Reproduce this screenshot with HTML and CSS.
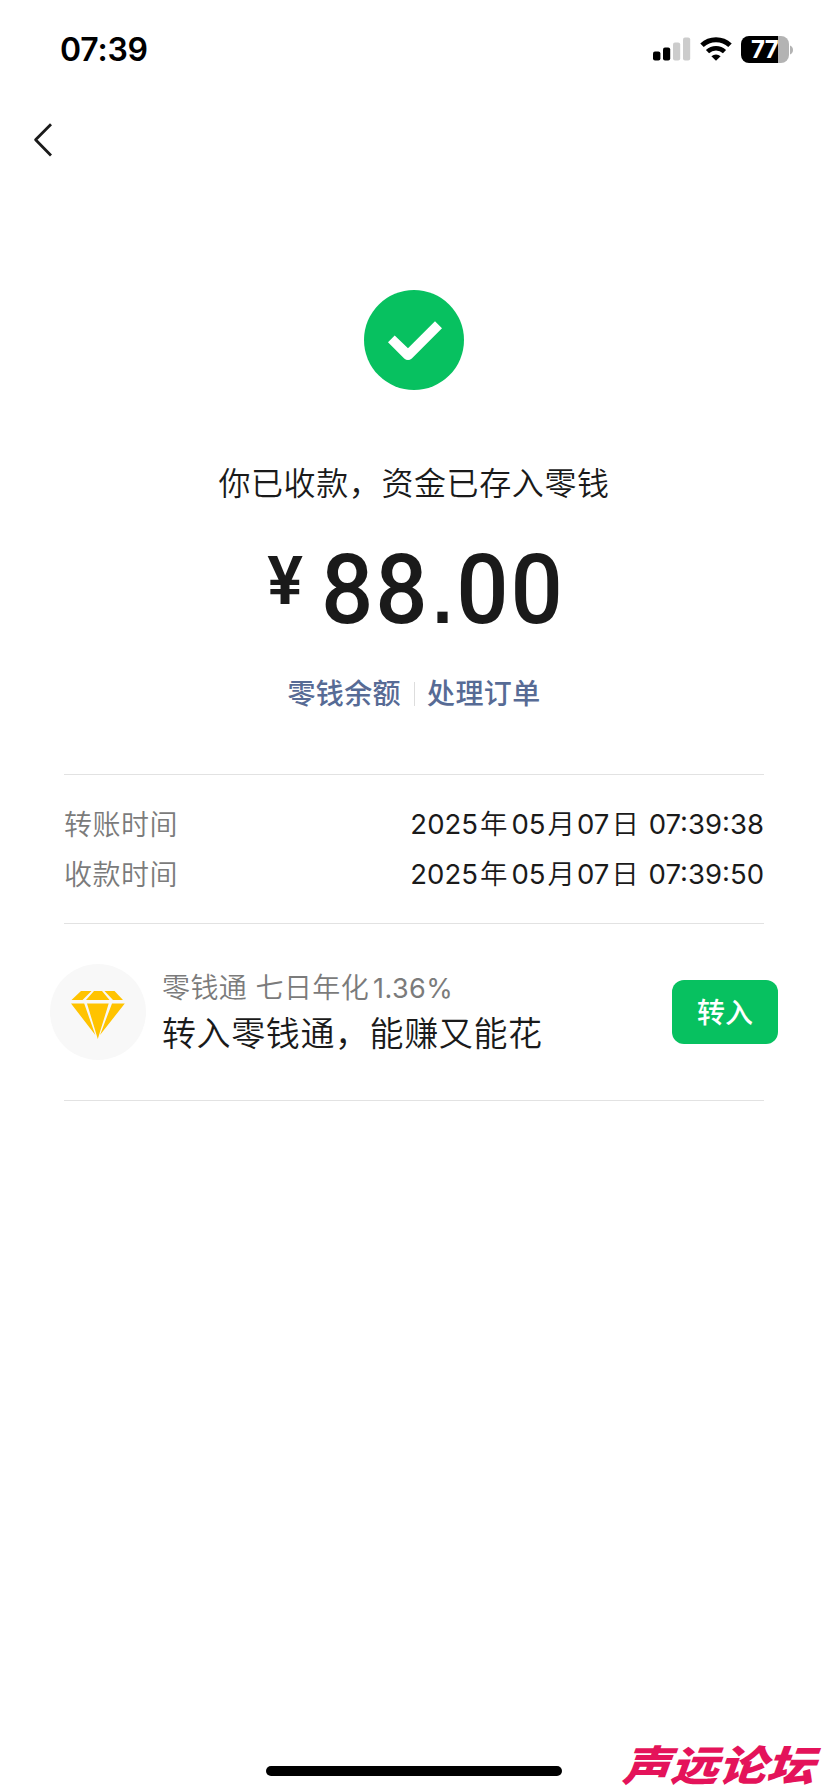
FILE: index.html
```html
<!DOCTYPE html>
<html lang="zh-CN">
<head>
<meta charset="utf-8">
<title>收款详情</title>
<link rel="stylesheet" href="styles.css">
</head>
<body>
<div class="screen">
  <header class="status">
    <span class="clock">07:39</span>
    <div class="indicators">
      <svg class="signal" width="38" height="24" viewBox="0 0 38 24">
        <rect x="0" y="14.5" width="7.4" height="9" rx="2"/>
        <rect x="10" y="10.5" width="7.2" height="13" rx="2"/>
        <rect class="dim" x="20" y="5.5" width="7.2" height="18" rx="2"/>
        <rect class="dim" x="30" y="0.5" width="7.2" height="23" rx="2"/>
      </svg>
      <svg class="wifi" width="32" height="24" viewBox="0 0 32 24">
        <path d="M2 8.3a20.2 20.2 0 0 1 28 0" fill="none" stroke="#000" stroke-width="5"/>
        <path d="M7.5 14.6a12.4 12.4 0 0 1 17 0" fill="none" stroke="#000" stroke-width="4.6"/>
        <path d="M16 23.8l-4.6-4.6a7 7 0 0 1 9.2 0z"/>
      </svg>
      <div class="battery"><span class="level">77</span></div>
      <svg class="tip" width="4" height="10" viewBox="0 0 4 10"><path d="M0 0.5c4 1.5 4 7.5 0 9z" fill="#b3b3b3"/></svg>
    </div>
  </header>
  <nav class="nav">
    <svg width="20" height="36" viewBox="0 0 20 36"><path d="M18 2.2L2.6 17.8L18 33.4" fill="none" stroke="#1a1a1a" stroke-width="2.8" stroke-linejoin="round"/></svg>
  </nav>
  <main class="content">
    <section class="result">
      <svg class="check" width="100" height="100" viewBox="0 0 100 100">
        <circle cx="50" cy="50" r="50" fill="#07c160"/>
        <path d="M24 52.3L30.7 45.6L44 58.2L71 31.2L78 38.2L47.8 68.4Q44 71.6 40.2 68.4Z" fill="#fff"/>
      </svg>
      <h1 class="title">你已收款，资金已存入零钱</h1>
      <div class="amount"><span class="yen">¥</span><span class="value">88<span class="point">.</span>00</span></div>
      <div class="links"><a>零钱余额</a><i></i><a>处理订单</a></div>
    </section>
    <dl class="times">
      <div class="row"><dt>转账时间</dt><dd>2025<b class="year">年</b>05<b>月</b>07<b>日</b> 07:39:38</dd></div>
      <div class="row"><dt>收款时间</dt><dd>2025<b class="year">年</b>05<b>月</b>07<b>日</b> 07:39:50</dd></div>
    </dl>
    <section class="promo">
      <div class="badge">
        <svg width="54" height="48" viewBox="0 0 54 48" fill="#ffc300">
          <path d="M10 0H20.5L11.5 9H0.5ZM23 0H31L38.5 9H15ZM33.5 0H43.5L52 9H42ZM0 12.5H13.2L24.3 44ZM16 12.5H37.7L26.8 48ZM41 12.5H53.8L29 44Z"/>
        </svg>
      </div>
      <div class="copy">
        <p class="rate">零钱通 七日年化<span>1.36%</span></p>
        <p class="slogan">转入零钱通，能赚又能花</p>
      </div>
      <button class="transfer">转入</button>
    </section>
  </main>
  <footer class="footer"><div class="home"></div></footer>
  <div class="mark">声远论坛</div>
</div>
</body>
</html>
```
FILE: styles.css
```css
* { box-sizing: border-box; margin: 0; padding: 0; }
body { background: #fff; color: #1a1a1a; font-family: Inter, "Noto Sans CJK SC", sans-serif; }
.screen { position: relative; display: flex; flex-direction: column; width: 828px; height: 1792px; }

.status { display: flex; justify-content: space-between; height: 100px; padding: 0 34px 0 60px; color: #000; }
.clock { padding-top: 31px; font-size: 32px; line-height: 38px; font-weight: 600; letter-spacing: -0.2px; }
.indicators { display: flex; align-items: flex-start; padding-top: 36px; }
.signal { margin-top: 1px; }
.signal .dim { fill: #ccc; }
.wifi { margin: 1px 0 0 9px; }
.battery { width: 48px; height: 27px; margin-left: 9px; border-radius: 8px; background: linear-gradient(90deg, #000 37px, #b3b3b3 37px); }
.level { display: block; padding-left: 10px; font-size: 24px; line-height: 27px; font-weight: 700; letter-spacing: -0.6px; color: #fff; }
.tip { margin: 9px 0 0 1px; }

.nav { height: 80px; padding: 22px 0 0 33px; }
.content { flex: 1; padding: 110px 64px 0; }
.result { display: flex; flex-direction: column; align-items: center; height: 485px; border-bottom: 1px solid #e2e2e2; }
.title { margin-top: 71px; font-size: 32px; line-height: 46px; font-weight: 350; letter-spacing: 0.6px; }
.amount { display: flex; align-items: flex-start; height: 100px; margin-top: 34px; font-family: Roboto, sans-serif; font-weight: 500; line-height: 99px; }
.yen { margin-right: 18px; font-size: 67px; line-height: 81px; font-weight: 600; }
.value { margin-right: -17px; font-size: 97px; letter-spacing: 2px; transform: scaleX(0.95); transform-origin: left; }
.point { margin: 0 2px 0 3px; font-family: "Liberation Sans", sans-serif; font-size: 76px; font-weight: 700; line-height: 1; }
.links { display: flex; align-items: center; margin-top: 32px; font-size: 28px; line-height: 42px; font-weight: 500; letter-spacing: 0.4px; color: #576b95; }
.links i { width: 1px; height: 24px; margin: 0 12px 0 13px; background: #ddd; }

.times { height: 149px; padding-top: 25px; border-bottom: 1px solid #e2e2e2; }
.row { display: flex; justify-content: space-between; height: 50px; font-size: 28px; line-height: 50px; }
.row dt { color: #7b7b7b; letter-spacing: 0.5px; font-weight: 350; }
.row dd { font-size: 27.5px; line-height: 48px; white-space: nowrap; }
.row b { font-weight: 350; margin: 0 2px; }
.row .year { margin-right: 4px; }

.promo { display: flex; align-items: center; height: 177px; border-bottom: 1px solid #e2e2e2; }
.badge { display: flex; align-items: center; justify-content: center; width: 96px; height: 96px; margin-left: -14px; padding-top: 5px; border-radius: 50%; background: #f8f8f8; }
.copy { flex: 1; padding: 1px 0 0 16px; white-space: nowrap; }
.rate { font-size: 28px; line-height: 42px; font-weight: 350; letter-spacing: 0.4px; color: #7b7b7b; }
.rate span { margin-left: 4px; font-size: 27px; font-weight: 400; }
.slogan { font-size: 34px; line-height: 47px; font-weight: 350; letter-spacing: 0.6px; padding-bottom: 2px; }
.transfer { width: 106px; height: 64px; margin-right: -14px; padding-bottom: 2px; border: 0; border-radius: 12px; background: #07c160; color: #fff; font: 500 28px/62px "Noto Sans CJK SC", sans-serif; }

.footer { display: flex; justify-content: center; height: 26px; }
.home { width: 296px; height: 10px; border-radius: 5px; background: #000; }
.mark { position: absolute; left: 628px; top: 1735px; font: 900 48px/56px "Noto Sans CJK SC", sans-serif; color: #e4135a; white-space: nowrap; transform: skewX(-20deg) scaleY(0.87); }
```
